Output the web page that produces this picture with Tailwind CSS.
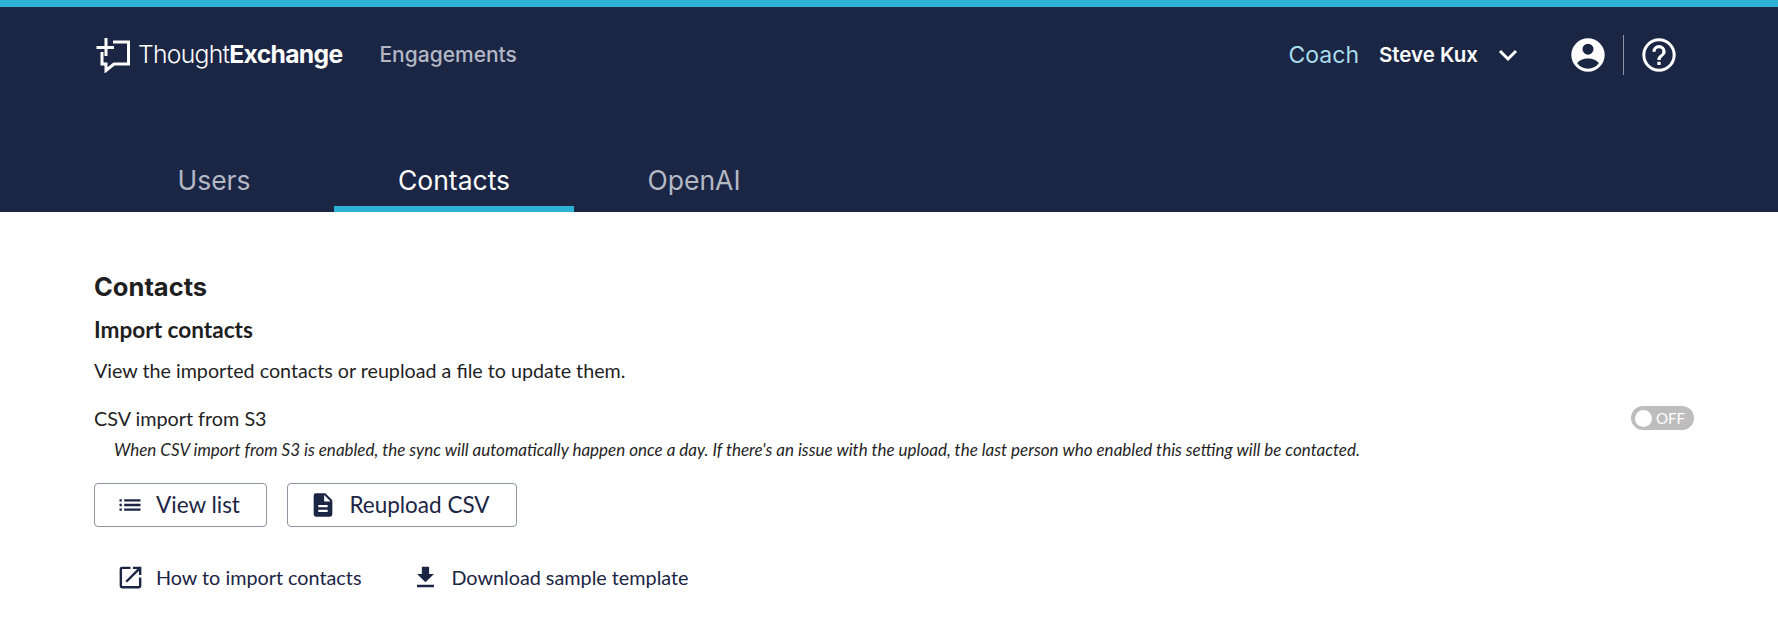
<!DOCTYPE html>
<html lang="en">
<head>
  <meta charset="UTF-8" />
  <title>Contacts</title>
  <script src="https://cdn.jsdelivr.net/npm/@tailwindcss/browser@4"></script>
</head>
<body class="bg-white font-['Lato',sans-serif] text-[#1f1f1f] overflow-hidden">
  <header class="h-[212px] bg-[#1b2544] border-t-[7px] border-[#2eb2d3] font-['Inter',sans-serif]">
    <div class="h-[96px] pl-[95px] pr-[99px] flex items-center">
      <svg class="w-[36px] h-[36px] mr-[7px]" viewBox="0 0 36 36" fill="none" stroke="#fff" stroke-width="3">
        <path d="M18 5H33.500V27H19L11 33.500V27H7V15M1.500 10.500H19M11 1V19" />
      </svg>
      <span class="text-[24.700px] tracking-[-0.7px] text-white font-light">Thought<span class="font-bold">Exchange</span></span>
      <a class="ml-[37px] text-[21px] font-medium text-[#b4b7c4]">Engagements</a>
      <a class="ml-auto text-[23px] text-[#a9dcec]">Coach</a>
      <span class="ml-[20px] text-[20.500px] font-semibold text-white">Steve Kux</span>
      <svg class="ml-[20px] w-[20px] h-[14px]" viewBox="0 0 20 14" fill="none" stroke="#fff" stroke-width="3"><path d="M2 3L10 11L18 3" /></svg>
      <svg class="ml-[50px] w-[40px] h-[40px]" viewBox="0 0 24 24" fill="#fff"><path d="M12 2a10 10 0 1 0 0 20 10 10 0 0 0 0-20zm0 3.200a3.300 3.300 0 1 1 0 6.600 3.300 3.300 0 0 1 0-6.600zm0 15a8.200 8.200 0 0 1-6.500-3.200c1-1.900 3.800-2.900 6.500-2.900s5.500 1 6.500 2.900a8.200 8.200 0 0 1-6.500 3.200z" /></svg>
      <div class="ml-[15px] w-px h-[40px] bg-[#8f94a6]"></div>
      <svg class="ml-[15px] w-[40px] h-[40px]" viewBox="0 0 24 24" fill="#fff"><path d="M11 18h2v-2h-2v2zm1-16a10 10 0 1 0 0 20 10 10 0 0 0 0-20zm0 18.200a8.200 8.200 0 1 1 0-16.400 8.200 8.200 0 0 1 0 16.400zM12 6a4 4 0 0 0-4 4h2a2 2 0 1 1 4 0c0 2-3 1.750-3 5h2c0-2.250 3-2.500 3-5a4 4 0 0 0-4-4z" /></svg>
    </div>
    <nav class="h-[109px] pl-[94px] flex items-end text-[26.500px]">
      <a class="w-[240px] h-[51px] text-center leading-[38px] text-[#b4b7c4]">Users</a>
      <a class="w-[240px] h-[51px] text-center leading-[38px] text-white border-b-[6px] border-[#2eb2d3]">Contacts</a>
      <a class="w-[240px] h-[51px] text-center leading-[38px] text-[#b4b7c4]">OpenAI</a>
    </nav>
  </header>

  <main class="pl-[94px] pr-[84px] pt-[58px]">
    <h1 class="font-['Inter',sans-serif] text-[25.500px] leading-[34px] font-bold">Contacts</h1>
    <h2 class="mt-[10px] text-[22.600px] leading-[32px] font-bold">Import contacts</h2>
    <p class="mt-[9px] text-[19.700px] leading-[32px]">View the imported contacts or reupload a file to update them.</p>
    <div class="mt-[15px] flex items-center justify-between">
      <span class="text-[19.800px] leading-[32px]">CSV import from S3</span>
      <div class="w-[63px] h-[24px] rounded-full bg-[#bdbdbd] flex items-center pl-[4px] gap-[4px]">
        <span class="w-[17px] h-[17px] rounded-full bg-white"></span>
        <span class="text-[15px] leading-none text-white">OFF</span>
      </div>
    </div>
    <p class="mt-[2px] pl-[20px] text-[17px] leading-[28px] italic">When CSV import from S3 is enabled, the sync will automatically happen once a day. If there's an issue with the upload, the last person who enabled this setting will be contacted.</p>
    <div class="mt-[19px] flex gap-[20px] text-[22.500px] text-[#1b2544]">
      <button class="w-[173px] h-[44px] pr-[5px] border border-[#8f93a3] rounded-[4px] flex items-center justify-center gap-[12px]">
        <svg class="w-[28px] h-[28px]" viewBox="0 0 24 24" fill="#1b2544"><path d="M3 13h2v-2H3v2zm0 4h2v-2H3v2zm0-8h2V7H3v2zm4 4h14v-2H7v2zm0 4h14v-2H7v2zM7 7v2h14V7H7z" /></svg>
        View list
      </button>
      <button class="w-[230px] h-[44px] pr-[5px] border border-[#8f93a3] rounded-[4px] flex items-center justify-center gap-[12px]">
        <svg class="w-[28px] h-[28px]" viewBox="0 0 24 24" fill="#1b2544"><path d="M14 2H6a2 2 0 0 0-2 2v16a2 2 0 0 0 2 2h12a2 2 0 0 0 2-2V8l-6-6zm2 16H8v-2h8v2zm0-4H8v-2h8v2zm-3-5V3.500L18.500 9H13z" /></svg>
        Reupload CSV
      </button>
    </div>
    <div class="mt-[33px] pl-[22px] flex items-center text-[19.800px] leading-[34px] text-[#1b2544]">
      <svg class="w-[29px] h-[29px] mr-[11px]" viewBox="0 0 24 24" fill="#1b2544"><path d="M19 19H5V5h7V3H5a2 2 0 0 0-2 2v14a2 2 0 0 0 2 2h14a2 2 0 0 0 2-2v-7h-2v7zM14 3v2h3.590l-9.830 9.830 1.410 1.410L19 6.410V10h2V3h-7z" /></svg>
      <span>How to import contacts</span>
      <svg class="ml-[50px] w-[29px] h-[29px] mr-[11px]" viewBox="0 0 24 24" fill="#1b2544"><path d="M19 9h-4V3H9v6H5l7 7 7-7zM5 18v2h14v-2H5z" /></svg>
      <span>Download sample template</span>
    </div>
  </main>
</body>
</html>
